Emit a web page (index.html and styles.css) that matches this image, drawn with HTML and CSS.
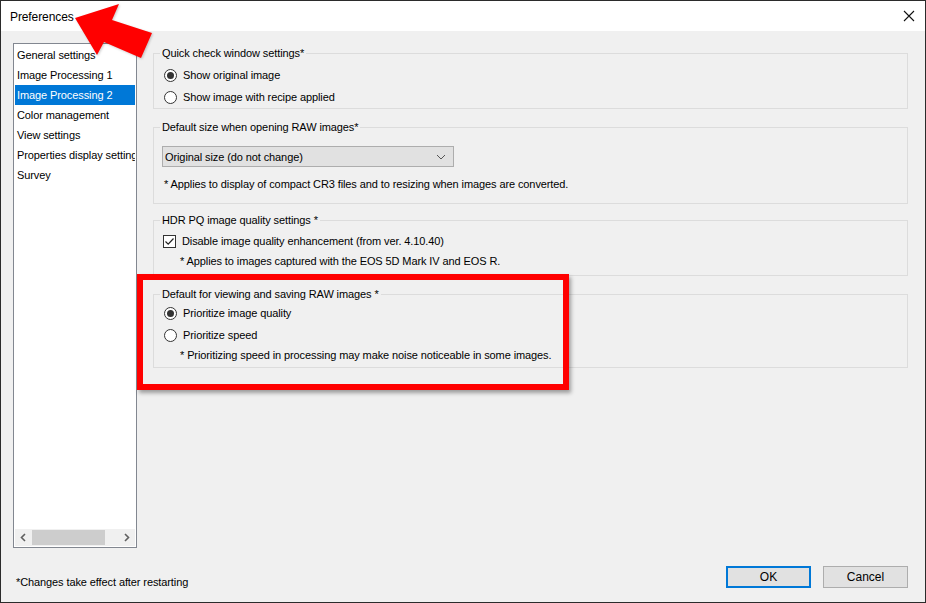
FILE: index.html
```html
<!DOCTYPE html>
<html>
<head>
  <title>Preferences</title>
  <link rel="stylesheet" href="styles.css">
</head>
<body>

<div class="window">
  <div class="titlebar">
    <span class="title">Preferences</span>
    <svg class="close" width="12" height="12" viewBox="0 0 12 12"><path d="M1 1L11 11M11 1L1 11" stroke="#111" stroke-width="1.1"/></svg>
  </div>

  <div class="main">
    <div class="sidebar">
      <div class="items">
        <div class="item">General settings</div>
        <div class="item">Image Processing 1</div>
        <div class="item selected">Image Processing 2</div>
        <div class="item">Color management</div>
        <div class="item">View settings</div>
        <div class="item">Properties display settings</div>
        <div class="item">Survey</div>
      </div>
      <div class="hscroll">
        <svg width="17" height="17" viewBox="0 0 17 17"><path d="M10 5L6.5 8.5L10 12" fill="none" stroke="#606060" stroke-width="1.6"/></svg>
        <div class="track"><div class="thumb"></div></div>
        <svg width="17" height="17" viewBox="0 0 17 17"><path d="M7 5L10.5 8.5L7 12" fill="none" stroke="#606060" stroke-width="1.6"/></svg>
      </div>
    </div>

    <div class="panel">
      <fieldset class="group g1">
        <legend>Quick check window settings*</legend>
        <div class="opt"><span class="radio checked"></span>Show original image</div>
        <div class="opt"><span class="radio"></span>Show image with recipe applied</div>
      </fieldset>

      <fieldset class="group g2">
        <legend>Default size when opening RAW images*</legend>
        <div class="select">
          <span>Original size (do not change)</span>
          <svg width="10" height="6" viewBox="0 0 10 6"><path d="M1 1L5 5L9 1" fill="none" stroke="#555" stroke-width="1"/></svg>
        </div>
        <div class="note">* Applies to display of compact CR3 files and to resizing when images are converted.</div>
      </fieldset>

      <fieldset class="group g3">
        <legend>HDR PQ image quality settings *</legend>
        <div class="opt check-row"><span class="checkbox"><svg width="11" height="11" viewBox="0 0 11 11"><path d="M1.5 5.5L4.2 8.2L9.5 2.5" fill="none" stroke="#222" stroke-width="1.2"/></svg></span>Disable image quality enhancement (from ver. 4.10.40)</div>
        <div class="note indent">* Applies to images captured with the EOS 5D Mark IV and EOS R.</div>
      </fieldset>

      <fieldset class="group g4">
        <legend>Default for viewing and saving RAW images *</legend>
        <div class="opt"><span class="radio checked"></span>Prioritize image quality</div>
        <div class="opt"><span class="radio"></span>Prioritize speed</div>
        <div class="note indent">* Prioritizing speed in processing may make noise noticeable in some images.</div>
      </fieldset>
    </div>
  </div>

  <div class="footer">
    <span class="footnote">*Changes take effect after restarting</span>
    <div class="buttons">
      <button class="btn default">OK</button>
      <button class="btn">Cancel</button>
    </div>
  </div>

  <!-- annotation overlays -->
  <div class="highlight"></div>
  <svg class="arrow" width="160" height="70" viewBox="0 0 160 70">
    <polygon points="75,18 119,4 112,20 152,33 141,58 104,42 97,55" fill="#ff0000"/>
  </svg>
</div>

</body>
</html>
```

FILE: styles.css
```css
body {
  margin: 0;
  font-family: "Liberation Sans", Arial, sans-serif;
  font-size: 11px;
  letter-spacing: -0.1px;
  color: #000;
  background: #fff;
}
.window {
  position: relative;
  width: 926px;
  height: 603px;
  box-sizing: border-box;
  border: 1px solid #2b2b2b;
  background: #f0f0f0;
  display: flex;
  flex-direction: column;
  overflow: hidden;
}
.titlebar {
  height: 30px;
  background: #fff;
  display: flex;
  align-items: center;
  justify-content: space-between;
  padding: 0 10px 0 9px;
  flex-shrink: 0;
}
.title {
  font-size: 12px;
  margin-top: 1px;
}
.main {
  display: flex;
  padding: 12px 17px 0 12px;
  flex: 1;
}
.sidebar {
  border: 1px solid #828790;
  background: #fff;
  padding: 1px;
  display: flex;
  flex-direction: column;
  width: 120px;
  height: 501px;
}
.items {
  flex: 1;
  overflow: hidden;
}
.item {
  height: 20px;
  line-height: 20px;
  padding-left: 2px;
  white-space: nowrap;
  overflow: hidden;
}
.item.selected {
  background: #0078d7;
  color: #fff;
}
.hscroll {
  height: 17px;
  background: #f0f0f0;
  display: flex;
  align-items: center;
}
.track {
  flex: 1;
  height: 17px;
  display: flex;
  align-items: center;
}
.thumb {
  width: 73px;
  height: 15px;
  background: #cdcdcd;
}
.panel {
  flex: 1;
  margin-left: 16px;
  padding-top: 3px;
}
.group {
  margin: 0 0 11px 0;
  padding: 0 10px;
  border: 1px solid #dcdcdc;
}
.group legend {
  padding: 0 2px;
  margin-left: -4px;
  line-height: 14px;
}
.opt {
  height: 22px;
  display: flex;
  align-items: center;
}
.radio {
  width: 11px;
  height: 11px;
  border: 1px solid #333;
  border-radius: 50%;
  background: #fff;
  margin-right: 6px;
  display: flex;
  align-items: center;
  justify-content: center;
}
.radio.checked::after {
  content: "";
  width: 7px;
  height: 7px;
  border-radius: 50%;
  background: #333;
}
.checkbox {
  width: 11px;
  height: 11px;
  border: 1px solid #333;
  background: #fff;
  margin: 0 6px 0 -1px;
  display: flex;
}
.note {
  line-height: 14px;
}
.note.indent {
  padding-left: 16px;
}
.g1 { padding-top: 4px; padding-bottom: 0; }
.g2 { padding-top: 12px; padding-bottom: 12px; margin-bottom: 9px; }
.g2 .note { margin-top: 10px; }
.g3 { padding-top: 5px; padding-bottom: 7px; }
.g3 .check-row { height: 18px; }
.g3 .note { margin-top: 4px; }
.g4 { padding-top: 1px; padding-bottom: 5px; }
.g4 .note { margin-top: 2px; }
.select {
  height: 19px;
  margin-left: -2px;
  border: 1px solid #adadad;
  background: #e1e1e1;
  display: flex;
  align-items: center;
  justify-content: space-between;
  padding: 0 7px 0 2px;
  width: 281px;
}
.footer {
  height: 55px;
  display: flex;
  justify-content: space-between;
  padding: 0 17px 0 15px;
  flex-shrink: 0;
}
.footnote {
  margin-top: 28px;
}
.buttons {
  display: flex;
  gap: 12px;
  padding-top: 18px;
}
.btn {
  width: 85px;
  height: 22px;
  font-family: "Liberation Sans", Arial, sans-serif;
  font-size: 12px;
  background: #e1e1e1;
  border: 1px solid #adadad;
  padding: 0;
  color: #000;
}
.btn.default {
  border: 2px solid #0078d7;
}
.highlight {
  position: absolute;
  left: 136px;
  top: 273px;
  width: 420px;
  height: 104px;
  border: 6px solid #ff0000;
  box-shadow: 2px 3px 4px rgba(0, 0, 0, 0.35);
}
.arrow {
  position: absolute;
  left: -1px;
  top: -1px;
  filter: drop-shadow(1px 1px 1px rgba(0, 0, 0, 0.2));
}
```
